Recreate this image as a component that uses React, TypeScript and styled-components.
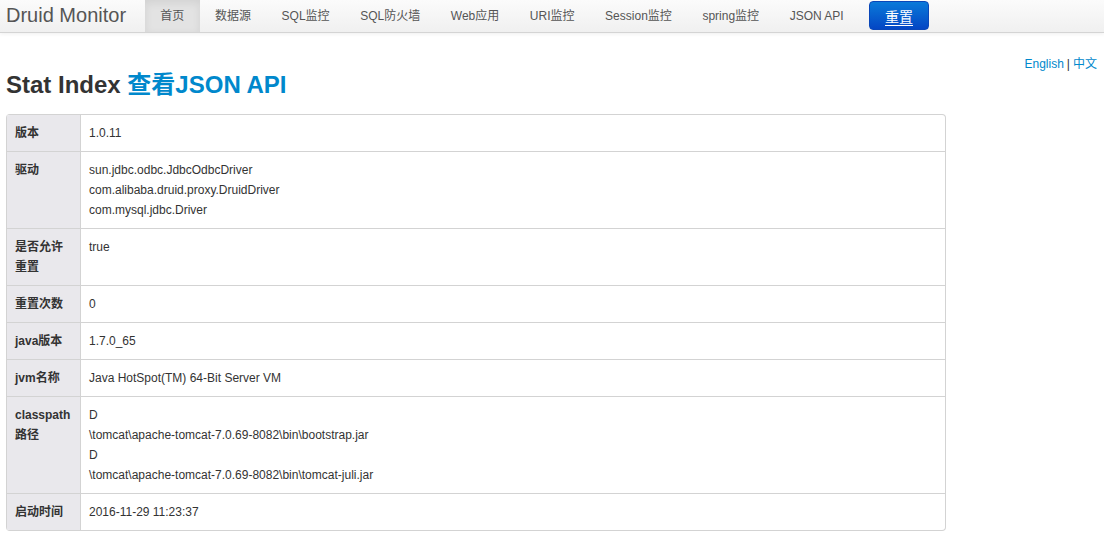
import React from "react";
import styled, { createGlobalStyle } from "styled-components";

const GlobalStyle = createGlobalStyle`
  body {
    margin: 0;
    background: #fff;
    font-family: "Liberation Sans", Arial, "Noto Sans CJK SC", sans-serif;
    font-size: 12px;
    line-height: 20px;
    color: #333;
  }
  a {
    color: #0088cc;
    text-decoration: none;
  }
`;

const Navbar = styled.div`
  display: flex;
  align-items: stretch;
  height: 33px;
  padding-left: 6px;
  background: linear-gradient(to bottom, #fbfbfb, #f0f0f0);
  border-bottom: 1px solid #d4d4d4;
  box-shadow: 0 1px 4px rgba(0, 0, 0, 0.065);
  box-sizing: border-box;
`;

const Brand = styled.a`
  display: flex;
  align-items: center;
  padding: 0 19px 0 0;
  font-size: 20px;
  color: #555;
  height: 30px;
`;

const NavItem = styled.a<{ $active?: boolean }>`
  display: flex;
  align-items: center;
  padding: 0 15.3px;
  height: 32px;
  font-size: 12px;
  color: #555;
  background: ${(p) => (p.$active ? "#e3e3e3" : "transparent")};
  box-shadow: ${(p) => (p.$active ? "inset 0 3px 8px rgba(0,0,0,0.08)" : "none")};
`;

const ResetButton = styled.button`
  align-self: flex-start;
  margin: 1px 0 0 10px;
  height: 29px;
  padding: 0 15px;
  font-family: "Liberation Sans", Arial, "Noto Sans CJK SC", sans-serif;
  font-size: 14px;
  color: #fff;
  background: linear-gradient(to bottom, #0a7ad9, #0446c4);
  border: 1px solid #0a47b8;
  border-radius: 4px;
  text-decoration: underline;
  text-underline-offset: 3px;
`;

const Page = styled.div`
  padding: 0 6px;
`;

const LangBar = styled.div`
  float: right;
  display: flex;
  padding-top: 21px;
  padding-right: 1px;
  font-size: 12px;
  color: #333;
  gap: 3px;
`;

const Title = styled.h3`
  margin: 0;
  padding-top: 32px;
  font-size: 24px;
  line-height: 40px;
  font-weight: bold;
  color: #333;
  margin-bottom: 9px;
`;

const Table = styled.table`
  width: 940px;
  border-collapse: separate;
  border-spacing: 0;
  border: 1px solid #d3d3d3;
  border-left: 0;
  border-radius: 4px;
  overflow: hidden;
`;

const Label = styled.th`
  width: 57px;
  padding: 8px 8px;
  text-align: left;
  vertical-align: top;
  font-weight: bold;
  background: #e9e8ec;
  border-left: 1px solid #d3d3d3;
  border-top: 1px solid #d3d3d3;
  tr:first-child & {
    border-top: 0;
  }
`;

const Value = styled.td`
  padding: 8px 8px;
  vertical-align: top;
  border-left: 1px solid #d3d3d3;
  border-top: 1px solid #d3d3d3;
  tr:first-child & {
    border-top: 0;
  }
`;

const rows: { label: string; lines: string[] }[] = [
  { label: "版本", lines: ["1.0.11"] },
  {
    label: "驱动",
    lines: [
      "sun.jdbc.odbc.JdbcOdbcDriver",
      "com.alibaba.druid.proxy.DruidDriver",
      "com.mysql.jdbc.Driver",
    ],
  },
  { label: "是否允许重置", lines: ["true"] },
  { label: "重置次数", lines: ["0"] },
  { label: "java版本", lines: ["1.7.0_65"] },
  { label: "jvm名称", lines: ["Java HotSpot(TM) 64-Bit Server VM"] },
  {
    label: "classpath路径",
    lines: [
      "D",
      "\\tomcat\\apache-tomcat-7.0.69-8082\\bin\\bootstrap.jar",
      "D",
      "\\tomcat\\apache-tomcat-7.0.69-8082\\bin\\tomcat-juli.jar",
    ],
  },
  { label: "启动时间", lines: ["2016-11-29 11:23:37"] },
];

const navItems = [
  "首页",
  "数据源",
  "SQL监控",
  "SQL防火墙",
  "Web应用",
  "URI监控",
  "Session监控",
  "spring监控",
  "JSON API",
];

export default function App() {
  return (
    <>
      <GlobalStyle />
      <Navbar>
        <Brand href="#">Druid Monitor</Brand>
        {navItems.map((item, i) => (
          <NavItem key={item} href="#" $active={i === 0}>
            {item}
          </NavItem>
        ))}
        <ResetButton>重置</ResetButton>
      </Navbar>
      <Page>
        <LangBar>
          <a href="#">English</a>|<a href="#">中文</a>
        </LangBar>
        <Title>
          Stat Index <a href="#">查看JSON API</a>
        </Title>
        <Table>
          <tbody>
            {rows.map((r) => (
              <tr key={r.label}>
                <Label>{r.label}</Label>
                <Value>
                  {r.lines.map((l, i) => (
                    <div key={i}>{l}</div>
                  ))}
                </Value>
              </tr>
            ))}
          </tbody>
        </Table>
      </Page>
    </>
  );
}
